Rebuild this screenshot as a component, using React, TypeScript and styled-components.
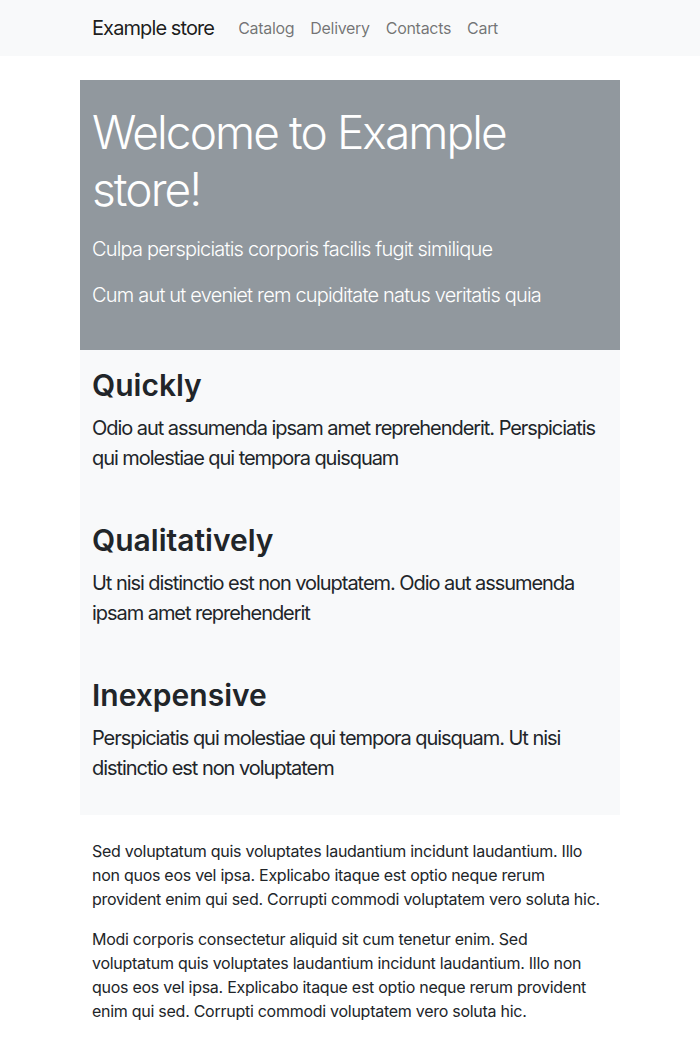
import React from "react";
import styled, { createGlobalStyle } from "styled-components";

const Global = createGlobalStyle`
  * { box-sizing: border-box; }
  body {
    margin: 0;
    font-family: Inter, "Noto Sans", sans-serif;
    color: #212529;
    background: #fff;
    font-size: 16px;
    line-height: 1.5;
  }
`;

const Navbar = styled.nav`
  background: #f8f9fa;
  height: 56px;
  display: flex;
  align-items: center;
`;

const Container = styled.div`
  width: 540px;
  margin: 0 auto;
  padding: 0 12px;
  display: flex;
  align-items: center;
`;

const Brand = styled.a`
  font-size: 20px;
  color: rgba(0, 0, 0, 0.9);
  text-decoration: none;
  margin-right: 16px;
  line-height: 30px;
  letter-spacing: -0.9px;
`;

const NavLink = styled.a`
  font-size: 16px;
  color: rgba(0, 0, 0, 0.55);
  text-decoration: none;
  padding: 8px;
  letter-spacing: -0.3px;
`;

const Main = styled.main`
  width: 540px;
  margin: 24px auto 0;
`;

const Hero = styled.section`
  background: #91989e;
  color: #fff;
  padding: 24px 12px 24px;
`;

const HeroTitle = styled.h1`
  font-size: 46px;
  font-weight: 300;
  line-height: 57px;
  margin: 0 0 16px;
  letter-spacing: -1.9px;
`;

const Lead = styled.p`
  font-size: 20px;
  font-weight: 300;
  line-height: 30px;
  margin: 0 0 16px;
  letter-spacing: -0.8px;
`;

const Features = styled.section`
  background: #f8f9fa;
`;

const Feature = styled.div`
  padding: 16px 12px;
`;

const FeatureTitle = styled.h2`
  font-size: 30px;
  font-weight: 600;
  line-height: 39px;
  margin: 0 0 8px;
`;

const FeatureText = styled.p`
  font-size: 20px;
  font-weight: 400;
  line-height: 30px;
  margin: 0 0 16px;
  letter-spacing: -1.05px;
`;

const Body = styled.div`
  padding: 24px 12px 0;
`;

const Para = styled.p`
  font-size: 16px;
  line-height: 24px;
  margin: 0 0 16px;
  letter-spacing: -0.27px;
`;

const features = [
  {
    title: "Quickly",
    text: "Odio aut assumenda ipsam amet reprehenderit. Perspiciatis qui molestiae qui tempora quisquam",
  },
  {
    title: "Qualitatively",
    text: "Ut nisi distinctio est non voluptatem. Odio aut assumenda ipsam amet reprehenderit",
  },
  {
    title: "Inexpensive",
    text: "Perspiciatis qui molestiae qui tempora quisquam. Ut nisi distinctio est non voluptatem",
  },
];

export default function App() {
  return (
    <>
      <Global />
      <Navbar>
        <Container>
          <Brand href="#">Example store</Brand>
          <NavLink href="#">Catalog</NavLink>
          <NavLink href="#">Delivery</NavLink>
          <NavLink href="#">Contacts</NavLink>
          <NavLink href="#">Cart</NavLink>
        </Container>
      </Navbar>
      <Main>
        <Hero>
          <HeroTitle>Welcome to Example store!</HeroTitle>
          <Lead>Culpa perspiciatis corporis facilis fugit similique</Lead>
          <Lead>Cum aut ut eveniet rem cupiditate natus veritatis quia</Lead>
        </Hero>
        <Features>
          {features.map((f) => (
            <Feature key={f.title}>
              <FeatureTitle>{f.title}</FeatureTitle>
              <FeatureText>{f.text}</FeatureText>
            </Feature>
          ))}
        </Features>
        <Body>
          <Para>
            Sed voluptatum quis voluptates laudantium incidunt laudantium. Illo non quos eos vel ipsa. Explicabo itaque est optio neque rerum provident enim qui sed. Corrupti commodi voluptatem vero soluta hic.
          </Para>
          <Para>
            Modi corporis consectetur aliquid sit cum tenetur enim. Sed voluptatum quis voluptates laudantium incidunt laudantium. Illo non quos eos vel ipsa. Explicabo itaque est optio neque rerum provident enim qui sed. Corrupti commodi voluptatem vero soluta hic.
          </Para>
        </Body>
      </Main>
    </>
  );
}
